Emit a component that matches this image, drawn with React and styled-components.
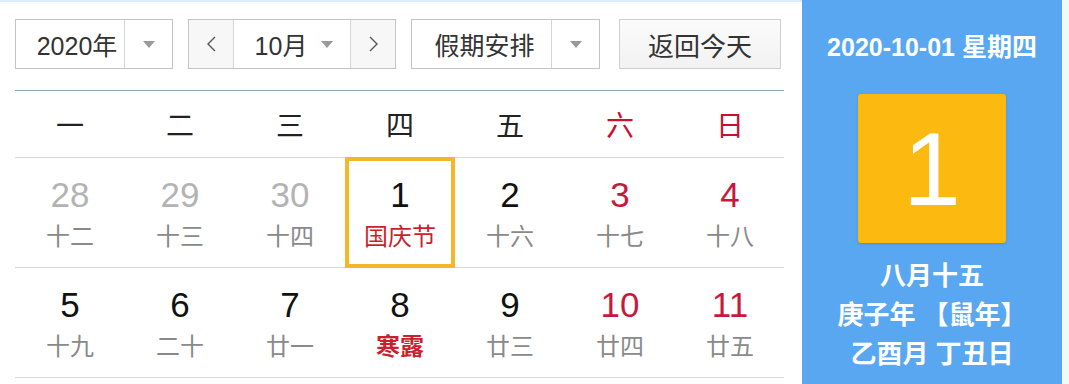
import React from "react";
import styled, { createGlobalStyle } from "styled-components";

const GlobalStyle = createGlobalStyle`
  html, body {
    margin: 0;
    padding: 0;
    background: #ffffff;
  }
  body {
    font-family: "Liberation Sans", "Noto Sans CJK SC", sans-serif;
  }
`;

const weekDays = [
  { label: "一" },
  { label: "二" },
  { label: "三" },
  { label: "四" },
  { label: "五" },
  { label: "六", weekend: true },
  { label: "日", weekend: true },
];

const weeks = [
  [
    { day: 28, lunar: "十二", muted: true },
    { day: 29, lunar: "十三", muted: true },
    { day: 30, lunar: "十四", muted: true },
    { day: 1, lunar: "国庆节", festival: true, selected: true },
    { day: 2, lunar: "十六" },
    { day: 3, lunar: "十七", weekend: true },
    { day: 4, lunar: "十八", weekend: true },
  ],
  [
    { day: 5, lunar: "十九" },
    { day: 6, lunar: "二十" },
    { day: 7, lunar: "廿一" },
    { day: 8, lunar: "寒露", term: true },
    { day: 9, lunar: "廿三" },
    { day: 10, lunar: "廿四", weekend: true },
    { day: 11, lunar: "廿五", weekend: true },
  ],
];

export default function App() {
  return (
    <>
      <GlobalStyle />
      <Page>
        <Main>
          <Toolbar>
            <SelectBox width={158}>
              <SelectLabel shift={14}>2020年</SelectLabel>
              <CaretCell>
                <Caret />
              </CaretCell>
            </SelectBox>
            <SelectBox width={208}>
              <ArrowCell>
                <Chevron dir="left" />
              </ArrowCell>
              <MonthCell>
                <span>10月</span>
                <Caret />
              </MonthCell>
              <ArrowCell>
                <Chevron dir="right" />
              </ArrowCell>
            </SelectBox>
            <SelectBox width={189}>
              <SelectLabel shift={6}>假期安排</SelectLabel>
              <CaretCell>
                <Caret />
              </CaretCell>
            </SelectBox>
            <TodayButton>返回今天</TodayButton>
          </Toolbar>

          <Calendar>
            <WeekHeader>
              {weekDays.map((w) => (
                <WeekDay key={w.label} weekend={w.weekend}>
                  {w.label}
                </WeekDay>
              ))}
            </WeekHeader>
            {weeks.map((week, i) => (
              <WeekRow key={i}>
                {week.map((d) => (
                  <DayCell key={d.day} selected={d.selected}>
                    <DayNumber muted={d.muted} weekend={d.weekend}>
                      {d.day}
                    </DayNumber>
                    <Lunar festival={d.festival} term={d.term}>
                      {d.lunar}
                    </Lunar>
                  </DayCell>
                ))}
              </WeekRow>
            ))}
          </Calendar>
        </Main>

        <SidePanel>
          <DateLine>2020-10-01 星期四</DateLine>
          <BigDay>1</BigDay>
          <LunarInfo>
            <span>八月十五</span>
            <span>庚子年 【鼠年】</span>
            <span>乙酉月 丁丑日</span>
          </LunarInfo>
        </SidePanel>
        <Edge />
      </Page>
    </>
  );
}

function Chevron({ dir }) {
  const points = dir === "left" ? "9,1 2,8 9,15" : "2,1 9,8 2,15";
  return (
    <svg width="11" height="16" viewBox="0 0 11 16">
      <polyline points={points} fill="none" stroke="#555" strokeWidth="1.4" />
    </svg>
  );
}

const Page = styled.div`
  display: flex;
  width: 1069px;
  height: 384px;
  overflow: hidden;
`;

const Main = styled.div`
  width: 802px;
  box-sizing: border-box;
  padding: 17px 18px 0 15px;
  border-top: 2px solid #dcecfa;
  background: #fff;
`;

const Toolbar = styled.div`
  display: flex;
  align-items: stretch;
  height: 50px;
  gap: 15px;
`;

const SelectBox = styled.div`
  display: flex;
  width: ${(p) => p.width}px;
  box-sizing: border-box;
  border: 1px solid #c4c4c4;
  background: #fff;
  color: #333;
  font-size: 25px;
`;

const SelectLabel = styled.div`
  flex: 1;
  display: flex;
  align-items: center;
  justify-content: center;
  padding-left: ${(p) => p.shift || 0}px;
  border-right: 1px solid #d6d6d6;
`;

const CaretCell = styled.div`
  width: 47px;
  display: flex;
  align-items: center;
  justify-content: center;
`;

const Caret = styled.span`
  display: inline-block;
  width: 0;
  height: 0;
  border-left: 6px solid transparent;
  border-right: 6px solid transparent;
  border-top: 7px solid #9a9a9a;
`;

const ArrowCell = styled.div`
  width: 44px;
  display: flex;
  align-items: center;
  justify-content: center;
  background: #f7f7f7;
`;

const MonthCell = styled.div`
  flex: 1;
  display: flex;
  align-items: center;
  justify-content: center;
  gap: 14px;
  padding-left: 4px;
  border-left: 1px solid #d6d6d6;
  border-right: 1px solid #d6d6d6;
`;

const TodayButton = styled.div`
  width: 162px;
  margin-left: 4px;
  box-sizing: border-box;
  border: 1px solid #cfcfcf;
  background: linear-gradient(#fbfbfb, #f2f2f2);
  color: #333;
  font-size: 26px;
  display: flex;
  align-items: center;
  justify-content: center;
`;

const Calendar = styled.div`
  margin-top: 21px;
  border-top: 1px solid #8fa6bb;
`;

const WeekHeader = styled.div`
  display: grid;
  grid-template-columns: repeat(7, 110px);
  height: 66px;
  border-bottom: 1px solid #d8d8d8;
`;

const WeekDay = styled.div`
  display: flex;
  align-items: center;
  justify-content: center;
  font-size: 28px;
  color: ${(p) => (p.weekend ? "#c9102e" : "#222")};
`;

const WeekRow = styled.div`
  display: grid;
  grid-template-columns: repeat(7, 110px);
  height: 109px;
  border-bottom: 1px solid #d8d8d8;
`;

const DayCell = styled.div`
  display: flex;
  flex-direction: column;
  align-items: center;
  box-sizing: border-box;
  box-shadow: ${(p) => (p.selected ? "inset 0 0 0 4px #f3b729" : "none")};
  margin-top: ${(p) => (p.selected ? "-1px" : "0")};
  height: ${(p) => (p.selected ? "111px" : "auto")};
  padding-top: ${(p) => (p.selected ? "18px" : "17px")};
`;

const DayNumber = styled.div`
  font-size: 35px;
  line-height: 40px;
  color: ${(p) => (p.muted ? "#b3b3b3" : p.weekend ? "#c8193c" : "#111")};
`;

const Lunar = styled.div`
  margin-top: 7px;
  font-size: 24px;
  line-height: 30px;
  font-weight: ${(p) => (p.term ? "bold" : "normal")};
  color: ${(p) => (p.festival || p.term ? "#cc1f2d" : "#8a8a8a")};
`;

const SidePanel = styled.div`
  width: 260px;
  background: #59a7f1;
  display: flex;
  flex-direction: column;
  align-items: center;
  color: #fff;
  font-weight: bold;
`;

const DateLine = styled.div`
  margin-top: 32px;
  font-size: 25px;
  line-height: 30px;
`;

const BigDay = styled.div`
  margin-top: 32px;
  width: 148px;
  height: 149px;
  border-radius: 3px;
  background: #fcb90f;
  box-shadow: 0 1px 3px rgba(0, 0, 0, 0.15);
  display: flex;
  align-items: center;
  justify-content: center;
  font-size: 104px;
  font-weight: normal;
  line-height: 1;
`;

const LunarInfo = styled.div`
  margin-top: 14px;
  display: flex;
  flex-direction: column;
  align-items: center;
  font-size: 26px;
  line-height: 39px;
`;

const Edge = styled.div`
  flex: 1;
  background: #f2f8fe;
`;
